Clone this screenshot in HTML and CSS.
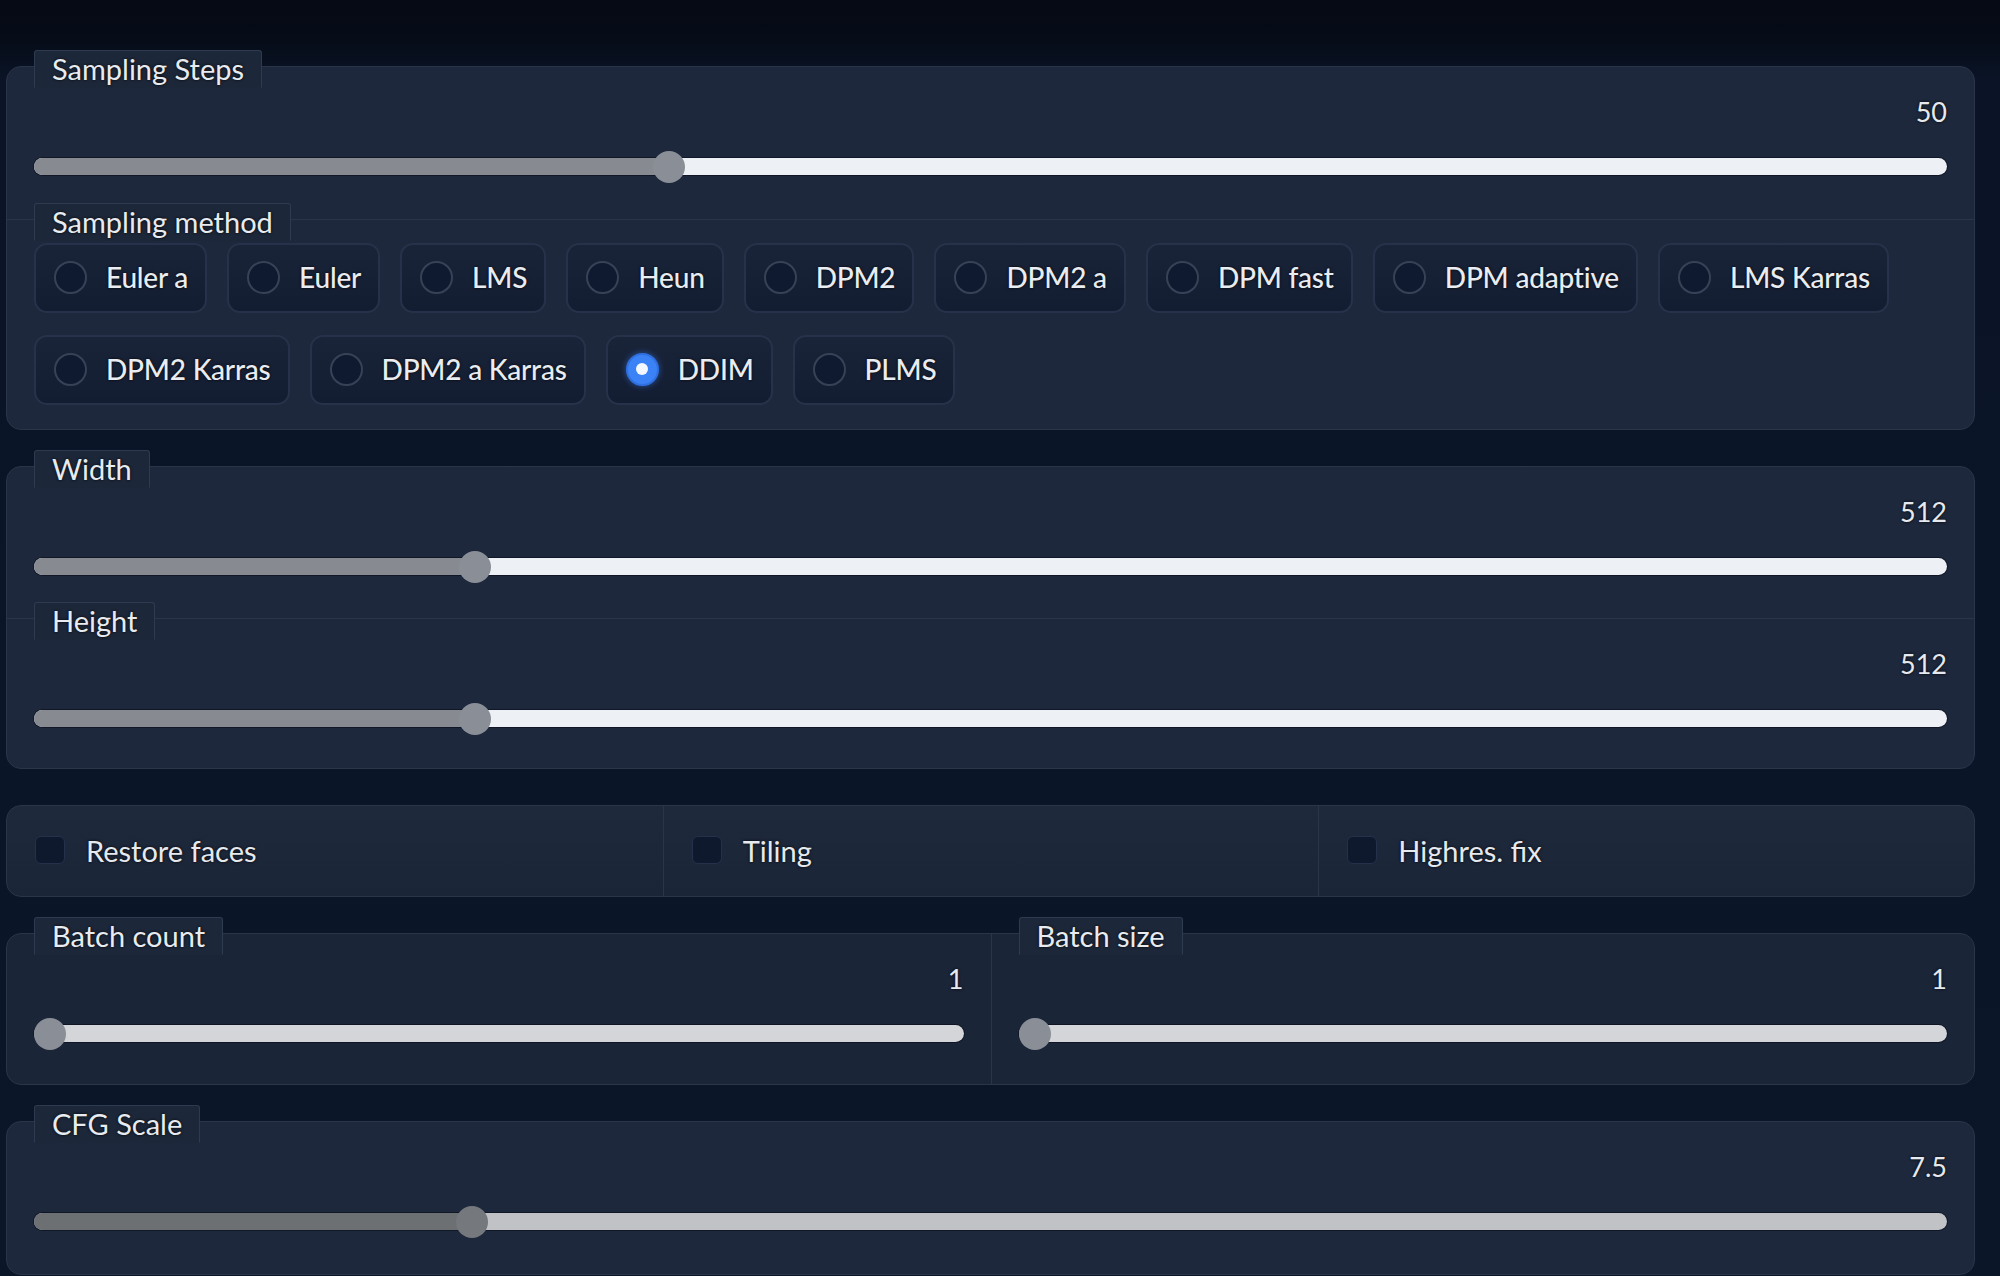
FILE: index.html
```html
<!DOCTYPE html>
<html lang="en">
<head>
<meta charset="utf-8">
<title>txt2img settings</title>
<link rel="stylesheet" href="styles.css">
</head>
<body>
<main class="page">

  <section class="panel">
    <div class="slider-block">
      <span class="block-label">Sampling Steps</span>
      <span class="value">50</span>
      <div class="track"><div class="fill" style="--p:0.3289"></div><div class="thumb" style="--p:0.3289"></div></div>
    </div>
    <div class="radio-block">
      <span class="block-label">Sampling method</span>
      <div class="radio-list">
        <label class="radio"><span class="dot"></span><span>Euler a</span></label>
        <label class="radio"><span class="dot"></span><span>Euler</span></label>
        <label class="radio"><span class="dot"></span><span>LMS</span></label>
        <label class="radio"><span class="dot"></span><span>Heun</span></label>
        <label class="radio"><span class="dot"></span><span>DPM2</span></label>
        <label class="radio"><span class="dot"></span><span>DPM2 a</span></label>
        <label class="radio"><span class="dot"></span><span>DPM fast</span></label>
        <label class="radio"><span class="dot"></span><span>DPM adaptive</span></label>
        <label class="radio"><span class="dot"></span><span>LMS Karras</span></label>
        <label class="radio"><span class="dot"></span><span>DPM2 Karras</span></label>
        <label class="radio"><span class="dot"></span><span>DPM2 a Karras</span></label>
        <label class="radio is-checked"><span class="dot"></span><span>DDIM</span></label>
        <label class="radio"><span class="dot"></span><span>PLMS</span></label>
      </div>
    </div>
  </section>

  <section class="panel dims">
    <div class="slider-block">
      <span class="block-label">Width</span>
      <span class="value">512</span>
      <div class="track"><div class="fill" style="--p:0.2258"></div><div class="thumb" style="--p:0.2258"></div></div>
    </div>
    <div class="slider-block sep">
      <span class="block-label">Height</span>
      <span class="value">512</span>
      <div class="track"><div class="fill" style="--p:0.2258"></div><div class="thumb" style="--p:0.2258"></div></div>
    </div>
  </section>

  <section class="panel checks">
    <label class="check"><span class="box"></span><span>Restore faces</span></label>
    <label class="check"><span class="box"></span><span>Tiling</span></label>
    <label class="check"><span class="box"></span><span>Highres. fix</span></label>
  </section>

  <section class="panel batch">
    <div class="slider-block batch-track">
      <span class="block-label">Batch count</span>
      <span class="value">1</span>
      <div class="track"><div class="fill" style="--p:0"></div><div class="thumb" style="--p:0"></div></div>
    </div>
    <div class="slider-block batch-track vsep">
      <span class="block-label">Batch size</span>
      <span class="value">1</span>
      <div class="track"><div class="fill" style="--p:0"></div><div class="thumb" style="--p:0"></div></div>
    </div>
  </section>

  <section class="panel">
    <div class="slider-block cfg">
      <span class="block-label">CFG Scale</span>
      <span class="value">7.5</span>
      <div class="track"><div class="fill" style="--p:0.2241"></div><div class="thumb" style="--p:0.2241"></div></div>
    </div>
  </section>

</main>
</body>
</html>
```

FILE: styles.css
```css
* { box-sizing: border-box; }

html, body {
  margin: 0;
  height: 100%;
}

body {
  overflow: hidden;
  background:
    linear-gradient(to bottom, #050a14 0px, #060c18 40px, #0a1426 78px, #0b1629 100%);
  font-family: "Lato", "Source Sans Pro", "Noto Sans", sans-serif;
  color: #e6e9ee;
}

.page {
  display: flex;
  flex-direction: column;
  gap: 36px;
  padding: 66px 25px 0 6px;
}

.panel {
  position: relative;
  background: #1d283c;
  border: 1px solid #2a3549;
  border-radius: 15px;
}

.block-label {
  position: absolute;
  top: -17px;
  left: 27px;
  height: 38px;
  padding: 0 17px 2px;
  display: flex;
  align-items: center;
  font-size: 29px;
  line-height: 1;
  background: #1c2739;
  border: 1px solid #2e3a50;
  border-bottom-color: transparent;
  border-radius: 3px 3px 0 0;
  color: #e8ebf0;
  text-shadow: 0 0 3px rgba(0, 0, 0, 0.95);
  white-space: nowrap;
}

/* slider blocks */
.slider-block {
  position: relative;
  height: 152px;
  padding: 28px 27px 0 27px;
  display: flex;
  flex-direction: column;
}

.dims .slider-block { height: 151px; }
.dims .slider-block.sep {
  border-top: 1px solid #2a3549;
  height: 150px;
}

.batch .slider-block { height: 150px; }

.value {
  align-self: flex-end;
  font-size: 27px;
  line-height: 34px;
  color: #e6e9ee;
  text-shadow: 0 0 3px rgba(0, 0, 0, 0.95);
}

.track {
  position: relative;
  margin-top: 29px;
  height: 17px;
  border-radius: 9px;
  background: #edf0f5;
  box-shadow: 0 0 0 1px rgba(6, 10, 20, 0.55);
}

.fill {
  height: 100%;
  width: calc(16px + var(--p) * (100% - 32px));
  border-radius: 9px 0 0 9px;
  background: #878a90;
}

.thumb {
  position: absolute;
  top: 50%;
  left: calc(var(--p) * (100% - 32px));
  width: 32px;
  height: 32px;
  margin-top: -16px;
  border-radius: 50%;
  background: #8a8f97;
}

/* radios */
.radio-block {
  position: relative;
  border-top: 1px solid #2a3549;
  padding: 23px 27px 24px 27px;
}

.radio-list {
  display: flex;
  flex-wrap: wrap;
  gap: 22px 20px;
}

.radio {
  display: flex;
  align-items: center;
  gap: 19px;
  height: 70px;
  padding: 0 17px 2px 18px;
  border: 2px solid #27324a;
  border-radius: 13px;
  background: linear-gradient(to bottom, #1a2439, #131d32);
  font-size: 28px;
  font-weight: 500;
  letter-spacing: -0.2px;
  color: #e9ecf1;
  text-shadow: 0 0 3px rgba(0, 0, 0, 0.95);
  white-space: nowrap;
}

.dot {
  flex: none;
  width: 33px;
  height: 33px;
  border-radius: 50%;
  background: #0f1930;
  border: 2px solid #384256;
}

.radio.is-checked .dot {
  background: #3b82f6;
  border-color: #2f6fe0;
  box-shadow: 0 0 6px rgba(59, 130, 246, 0.55);
  display: flex;
  align-items: center;
  justify-content: center;
}

.radio.is-checked .dot::after {
  content: "";
  width: 12px;
  height: 12px;
  border-radius: 50%;
  background: #f4f7ff;
}

/* checkboxes */
.checks {
  display: grid;
  grid-template-columns: 1fr 1fr 1fr;
  height: 92px;
  background: linear-gradient(to bottom, #1e293c, #1b2538);
}

.check {
  display: flex;
  align-items: center;
  gap: 21px;
  padding: 0 0 2px 28px;
  font-size: 29px;
  color: #e6e9ee;
  text-shadow: 0 0 3px rgba(0, 0, 0, 0.95);
}

.check + .check {
  border-left: 1px solid #2a3549;
}

.box {
  flex: none;
  width: 30px;
  height: 28px;
  border-radius: 6px;
  background: #0e192e;
  border: 1px solid #25314a;
}

/* batch */
.batch {
  display: grid;
  grid-template-columns: 1fr 1fr;
  background: #1b2538;
}

.batch-track .track { background: #d3d5d9; }
.vsep { border-left: 1px solid #2a3549; }

/* cfg */
.cfg .track { background: #c0c2c6; }
.cfg .fill { background: #6d7073; }
.cfg .thumb { background: #75787d; }
```
